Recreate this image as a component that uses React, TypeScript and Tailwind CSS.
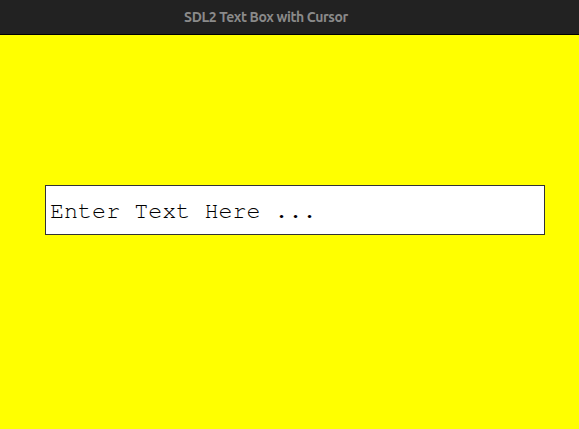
export default function App() {
  return (
    <div className="w-[579px] h-[429px] flex flex-col bg-[#ffff00] overflow-hidden">
      <div className="h-[34px] bg-[#222222] flex items-center justify-center pr-[47px] shrink-0">
        <span className="text-[14px] font-bold text-[#8a8a8a] font-['Ubuntu','Noto_Sans','DejaVu_Sans',sans-serif] tracking-[-0.4px]">
          SDL2 Text Box with Cursor
        </span>
      </div>
      <div className="h-px bg-black shrink-0" />
      <div className="flex-1 pt-[150px] pl-[45px]">
        <div className="w-[500px] h-[50px] bg-white border border-[#333333] pl-[4px] pt-[12px]">
          <span className="block text-[23.4px] leading-[26px] text-black font-['Nimbus_Mono_PS','Nimbus_Mono_L','FreeMono','Courier','Liberation_Mono',monospace]">
            Enter Text Here ...
          </span>
        </div>
      </div>
    </div>
  );
}
